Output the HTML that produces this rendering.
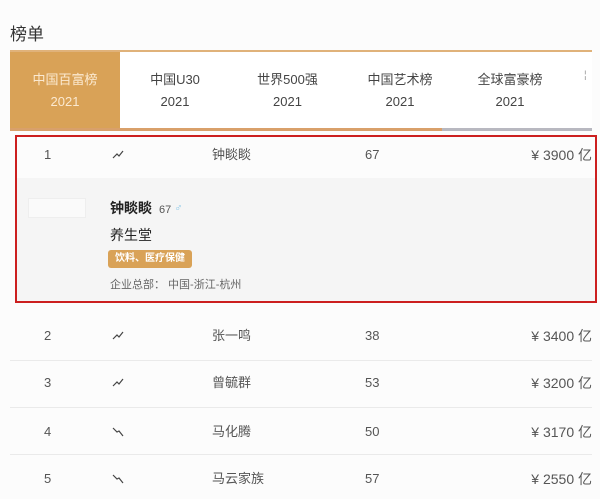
<!DOCTYPE html>
<html><head><meta charset="utf-8"><style>
*{margin:0;padding:0;box-sizing:border-box}
body{width:600px;height:499px;background:#fcfcfc;font-family:"Liberation Sans","Noto Sans CJK SC",sans-serif;color:#444;position:relative;overflow:hidden}
.a{position:absolute;white-space:nowrap}
.tab{position:absolute;top:52px;height:76px;text-align:center;font-size:13px;line-height:22px;padding-top:17px;color:#444}
.n{font-size:13px;color:#555;line-height:18px;height:18px}
.w{font-size:14px}
.sep{position:absolute;left:10px;width:582px;height:1px;background:#eaeaea}
</style></head><body>
<div class="a" style="left:10px;top:20px;font-size:17px;color:#333">榜单</div>
<div class="a" style="left:10px;top:50px;width:582px;height:2px;background:#e0b27a"></div>
<div class="a" style="left:10px;top:52px;width:582px;height:76px;background:#fff"></div>
<div class="tab" style="left:10px;width:110px;background:#d9a257;color:#fbe9d0">中国百富榜<br>2021</div>
<div class="tab" style="left:120px;width:110px">中国U30<br>2021</div>
<div class="tab" style="left:230px;width:115px">世界500强<br>2021</div>
<div class="tab" style="left:345px;width:110px">中国艺术榜<br>2021</div>
<div class="tab" style="left:455px;width:110px">全球富豪榜<br>2021</div>
<div class="a" style="left:584px;top:70px;font-size:10px;color:#999">¦</div>
<div class="a" style="left:10px;top:128px;width:432px;height:3px;background:#d9a06a"></div>
<div class="a" style="left:442px;top:128px;width:150px;height:3px;background:#b8b8c0"></div>
<div class="a" style="left:17px;top:178px;width:578px;height:124px;background:#f5f5f5"></div>
<div class="a" style="left:15px;top:135px;width:582px;height:168px;border:2px solid #cc1f1f"></div>
<div class="a" style="left:28px;top:198px;width:58px;height:20px;border:1px solid #eee;background:#fafafa"></div>
<div class="a" style="left:110px;top:199px;font-size:14px;font-weight:bold;color:#222;line-height:18px">钟睒睒 <span style="font-size:11px;font-weight:normal;color:#555">&nbsp;67</span><span style="font-size:11px;color:#8cc8e8;vertical-align:top"> ♂</span></div>
<div class="a" style="left:110px;top:226px;font-size:14px;color:#222;line-height:18px">养生堂</div>
<div class="a" style="left:108px;top:250px;width:84px;height:18px;background:#d9a257;border-radius:3px;color:#fff;font-size:10px;font-weight:bold;line-height:18px;text-align:center">饮料、医疗保健</div>
<div class="a" style="left:110px;top:278px;font-size:11px;color:#666;line-height:14px">企业总部：&nbsp;中国-浙江-杭州</div>
<div class="sep" style="top:360px"></div><div class="sep" style="top:407px"></div><div class="sep" style="top:454px"></div>
<div class="a n" style="left:44px;top:146px">1</div><div class="a n" style="left:212px;top:146px">钟睒睒</div><div class="a n" style="left:365px;top:146px">67</div><div class="a n w" style="right:8px;top:146px">¥ 3900 亿</div>
<div class="a n" style="left:44px;top:327px">2</div><div class="a n" style="left:212px;top:327px">张一鸣</div><div class="a n" style="left:365px;top:327px">38</div><div class="a n w" style="right:8px;top:327px">¥ 3400 亿</div>
<div class="a n" style="left:44px;top:374px">3</div><div class="a n" style="left:212px;top:374px">曾毓群</div><div class="a n" style="left:365px;top:374px">53</div><div class="a n w" style="right:8px;top:374px">¥ 3200 亿</div>
<div class="a n" style="left:44px;top:423px">4</div><div class="a n" style="left:212px;top:423px">马化腾</div><div class="a n" style="left:365px;top:423px">50</div><div class="a n w" style="right:8px;top:423px">¥ 3170 亿</div>
<div class="a n" style="left:44px;top:470px">5</div><div class="a n" style="left:212px;top:470px">马云家族</div><div class="a n" style="left:365px;top:470px">57</div><div class="a n w" style="right:8px;top:470px">¥ 2550 亿</div>
<svg class="a" style="left:112px;top:150px" width="12" height="10"><path d="M1 8 L5 4 L7 6 L11 1" stroke="#444" stroke-width="1.2" fill="none"/></svg>
<svg class="a" style="left:112px;top:331px" width="12" height="10"><path d="M1 8 L5 4 L7 6 L11 1" stroke="#444" stroke-width="1.2" fill="none"/></svg>
<svg class="a" style="left:112px;top:378px" width="12" height="10"><path d="M1 8 L5 4 L7 6 L11 1" stroke="#444" stroke-width="1.2" fill="none"/></svg>
<svg class="a" style="left:112px;top:427px" width="12" height="10"><path d="M1 1 L5 5 L7 4 L11 9" stroke="#444" stroke-width="1.2" fill="none"/></svg>
<svg class="a" style="left:112px;top:474px" width="12" height="10"><path d="M1 1 L5 5 L7 4 L11 9" stroke="#444" stroke-width="1.2" fill="none"/></svg>
</body></html>
